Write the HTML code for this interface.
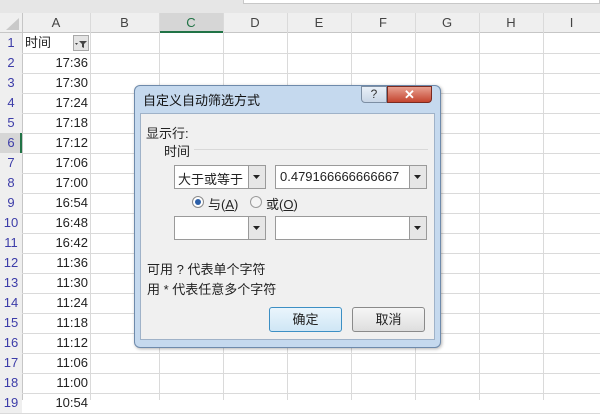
<!DOCTYPE html><html><head><meta charset="utf-8"><style>
*{margin:0;padding:0;box-sizing:border-box}
body{width:600px;height:400px;overflow:hidden;background:#fff;font-family:"Liberation Sans","Noto Sans CJK SC",sans-serif;position:relative}
.a{position:absolute}
.t{font-size:13px;color:#222}
</style></head><body>
<div class="a" style="left:0;top:0;width:600px;height:13px;background:#e6e6e6"></div>
<div class="a" style="left:243px;top:0;width:357px;height:4px;background:#fff;border:1px solid #c8c8c8;border-top:none"></div>
<!-- column headers -->
<div class="a" style="left:0;top:13px;width:600px;height:20px;background:#efefef;border-bottom:1px solid #c6c6c6"></div>
<svg class="a" style="left:4px;top:17px" width="16" height="14"><polygon points="15,1 15,13 2,13" fill="#c9c9c9"/></svg>
<div class="a" style="left:159px;top:13px;width:64px;height:20px;background:#d6d6d6;border-bottom:2px solid #217346"></div>
<div id="cols"></div>
<div id="rows"></div>
<script>
var xs=[22,90,159,223,287,351,415,479,543,600],L="ABCDEFGHI",h="";
for(var i=0;i<9;i++){h+='<div class="a" style="left:'+xs[i]+'px;top:13px;width:'+(xs[i+1]-xs[i])+'px;height:20px;line-height:20px;text-align:center;font-size:13px;color:'+(i==2?'#217346':'#444')+'">'+L[i]+'</div>';
h+='<div class="a" style="left:'+xs[i+1]+'px;top:13px;width:1px;height:387px;background:#dadada"></div>';}
h+='<div class="a" style="left:22px;top:13px;width:1px;height:387px;background:#c6c6c6"></div>';
var v=["17:36","17:30","17:24","17:18","17:12","17:06","17:00","16:54","16:48","16:42","11:36","11:30","11:24","11:18","11:12","11:06","11:00","10:54"];
for(var r=1;r<=19;r++){var y=33+20*(r-1);
h+='<div class="a" style="left:0;top:'+y+'px;width:22px;height:20px;background:'+(r==6?'#d6d6d6':'#efefef')+';line-height:20px;text-align:center;font-size:13px;color:#3c3ca8">'+r+'</div>';
if(r==6)h+='<div class="a" style="left:20px;top:'+y+'px;width:2px;height:20px;background:#217346"></div>';
h+='<div class="a" style="left:0;top:'+(y+20)+'px;width:600px;height:1px;background:#dadada"></div>';
if(r>1)h+='<div class="a" style="left:22px;top:'+y+'px;width:66px;height:20px;line-height:20px;text-align:right;font-size:13px;color:#222">'+v[r-2]+'</div>';}
document.getElementById('rows').innerHTML=h;
</script>
<div class="a t" style="left:25px;top:33px;line-height:20px">时间</div>
<div class="a" style="left:73px;top:35px;width:16px;height:16px;border:1px solid #a8a8a8;background:#e4e4e4"></div>
<svg class="a" style="left:74px;top:36px" width="14" height="14"><path d="M5 5h8l-3 3v4l-2-1V8z" fill="#444"/><path d="M1 7h3l-1.5 2z" fill="#444"/></svg>
<!-- dialog -->
<div class="a" style="left:134px;top:85px;width:307px;height:263px;border-radius:6px;background:#c5d9ee;border:1px solid #6e8aab;box-shadow:1px 1px 3px rgba(0,0,0,.3)"></div>
<div class="a t" style="left:143px;top:90px;font-size:13px;color:#111">自定义自动筛选方式</div>
<div class="a" style="left:361px;top:86px;width:26px;height:17px;border:1px solid #7d8ea3;border-radius:0 0 0 4px;background:linear-gradient(#e9f0f8,#c9d6e6);text-align:center;font-size:12px;line-height:15px;color:#333">?</div>
<div class="a" style="left:387px;top:86px;width:45px;height:17px;border:1px solid #7a2a20;border-radius:0 0 4px 0;background:linear-gradient(#e8a090,#c4452f);text-align:center;font-size:13px;line-height:15px;color:#fff;font-weight:bold">✕</div>
<div class="a" style="left:140px;top:113px;width:295px;height:227px;background:#f0f0f0;border:1px solid #9fb2c8"></div>
<div class="a t" style="left:146px;top:123px">显示行:</div>
<div class="a t" style="left:164px;top:141px">时间</div>
<div class="a" style="left:194px;top:149px;width:234px;height:1px;background:#d8d8d8"></div>
<div class="a" style="left:174px;top:165px;width:92px;height:24px;background:#fff;border:1px solid #9a9a9a"></div>
<div class="a t" style="left:178px;top:169px">大于或等于</div>
<div class="a" style="left:248px;top:166px;width:17px;height:22px;background:#e6e6e6;border-left:1px solid #9a9a9a"></div>
<div class="a" style="left:275px;top:165px;width:152px;height:24px;background:#fff;border:1px solid #9a9a9a"></div>
<div class="a t" style="left:280px;top:169px">0.479166666666667</div>
<div class="a" style="left:409px;top:166px;width:17px;height:22px;background:#e6e6e6;border-left:1px solid #9a9a9a"></div>
<div class="a" style="left:174px;top:216px;width:92px;height:24px;background:#fff;border:1px solid #9a9a9a"></div>
<div class="a" style="left:248px;top:217px;width:17px;height:22px;background:#e6e6e6;border-left:1px solid #9a9a9a"></div>
<div class="a" style="left:275px;top:216px;width:152px;height:24px;background:#fff;border:1px solid #9a9a9a"></div>
<div class="a" style="left:409px;top:217px;width:17px;height:22px;background:#e6e6e6;border-left:1px solid #9a9a9a"></div>
<svg class="a" style="left:0;top:0" width="600" height="400"><g fill="#222"><path d="M253 175h7l-3.5 4z"/><path d="M414 175h7l-3.5 4z"/><path d="M253 226h7l-3.5 4z"/><path d="M414 226h7l-3.5 4z"/></g>
<circle cx="198" cy="202" r="5.5" fill="#fff" stroke="#8a8a8a"/><circle cx="198" cy="202" r="3" fill="#2c5fa8"/>
<circle cx="256" cy="202" r="5.5" fill="#f4f4f4" stroke="#9a9a9a"/></svg>
<div class="a t" style="left:208px;top:194px">与(<u>A</u>)</div>
<div class="a t" style="left:266px;top:194px">或(<u>O</u>)</div>
<div class="a t" style="left:147px;top:259px">可用 ? 代表单个字符</div>
<div class="a t" style="left:147px;top:279px">用 * 代表任意多个字符</div>
<div class="a" style="left:269px;top:307px;width:73px;height:25px;border:1px solid #3c8fc4;border-radius:3px;background:linear-gradient(#eaf5fc,#cfe6f5);text-align:center;line-height:23px;font-size:13px;color:#222">确定</div>
<div class="a" style="left:352px;top:307px;width:73px;height:25px;border:1px solid #8a8a8a;border-radius:3px;background:linear-gradient(#f6f6f6,#dedede);text-align:center;line-height:23px;font-size:13px;color:#222">取消</div>
</body></html>
